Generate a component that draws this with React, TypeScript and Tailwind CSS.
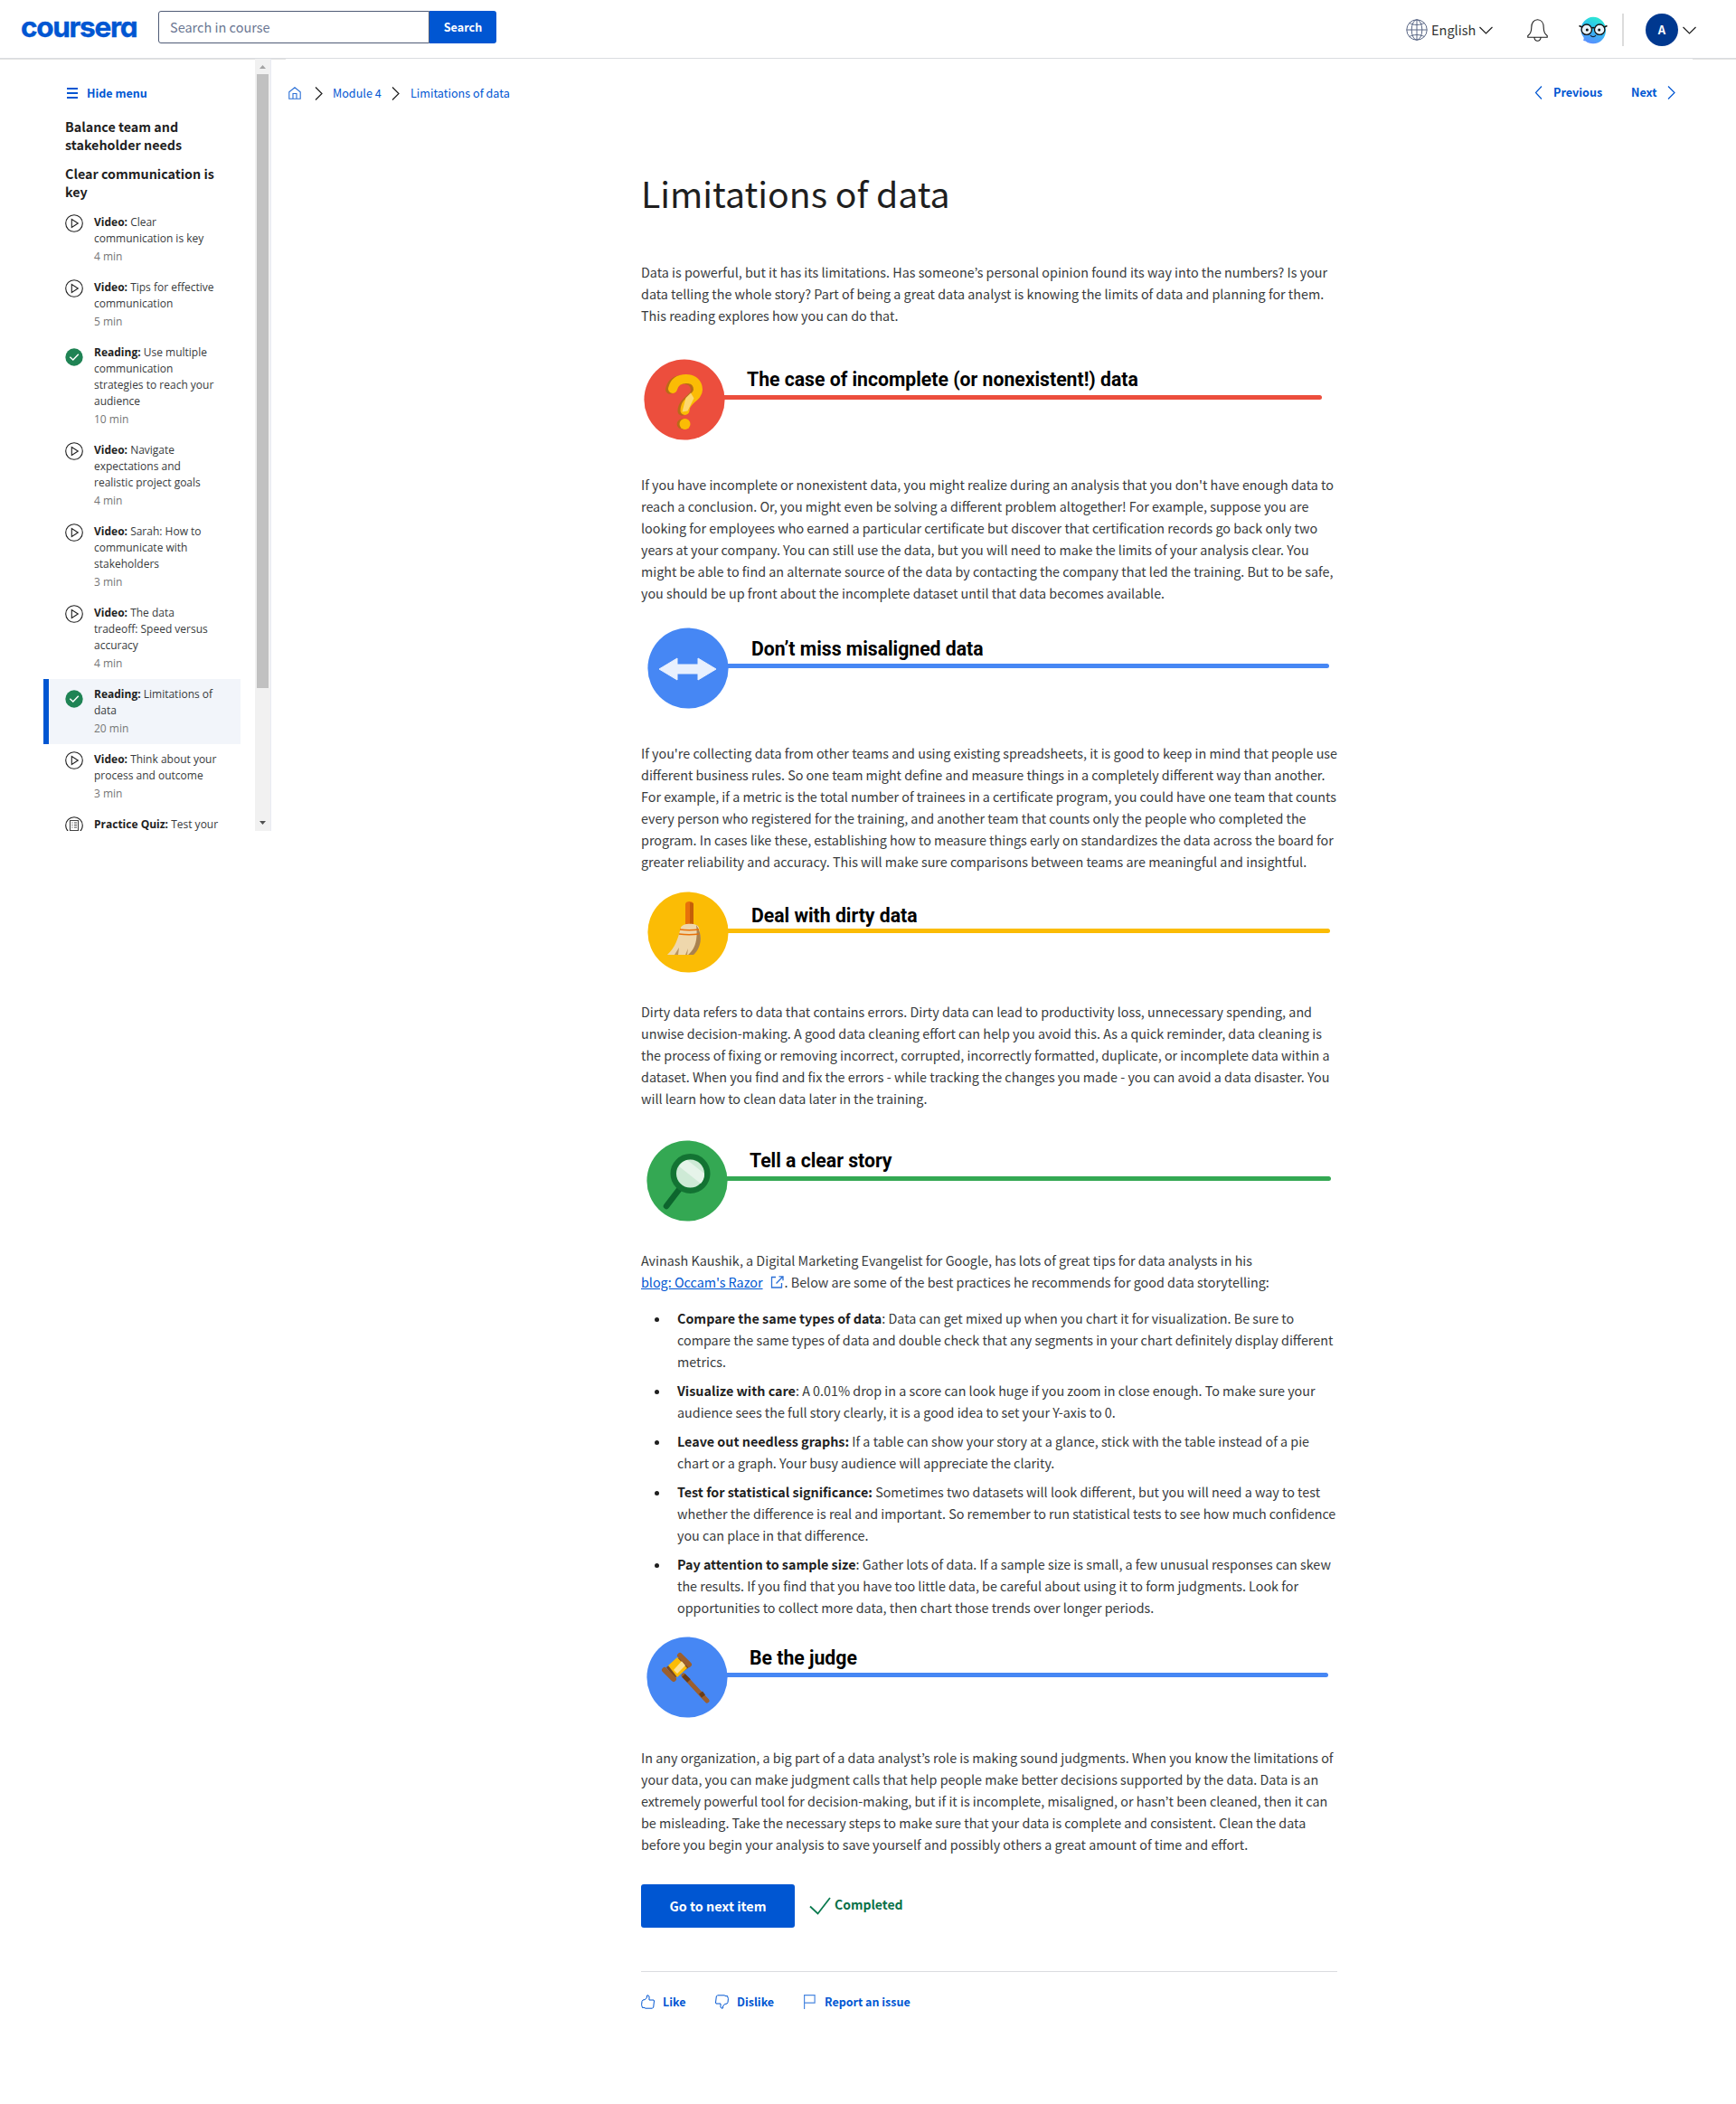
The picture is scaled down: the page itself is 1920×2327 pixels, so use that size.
import React from 'react';

function Chevron({ dir, className }: { dir: 'left' | 'right' | 'down'; className: string }) {
  const d = { left: 'M8 .5 1.5 7.5 8 14.5', right: 'M1 .5 8 7.5 1 14.5', down: 'M.5 1 7.5 8 14.5 1' }[dir];
  const box = dir === 'down' ? '0 0 15 9' : '0 0 9 15';
  return (
    <svg viewBox={box} className={className} fill="none" stroke="currentColor" strokeWidth="1.2">
      <path d={d} />
    </svg>
  );
}

function Header() {
  return (
    <header className="flex h-[65px] shrink-0 items-start border-b border-[#dadce0] bg-white">
      <svg className="ml-5 mt-1 h-14 w-[140px] overflow-visible" viewBox="0 0 140 56">
        <text x="3" y="36.5" fontFamily="Inter" fontWeight="700" fontSize="31.5" textLength="129.5" lengthAdjust="spacing"
          fill="#0056d2" stroke="#0056d2" strokeWidth=".4" style={{ fontFeatureSettings: '"cv11"' }}>coursera</text>
      </svg>
      <div className="ml-[15px] mt-3 flex h-9 w-[374px]">
        <div className="flex w-[300px] items-center rounded-l-[3px] border border-[#4f5b76] pl-3 text-[14.5px] text-[#6b7793]">Search in course</div>
        <button className="w-[74px] rounded-r-[3px] bg-[#0056d2] text-[12.6px] font-bold text-white">Search</button>
      </div>
      <div className="ml-[1006px] mt-[15px] flex h-9 items-center">
        <svg className="h-6 w-6" viewBox="0 0 24 24" fill="none" stroke="#5a6785" strokeWidth="1">
          <circle cx="12" cy="12" r="11.2" /><ellipse cx="12" cy="12" rx="5.8" ry="11.2" />
          <path d="M12 .8v22.4M.8 12h22.4M3.7 4.5c4.5 2.6 12 2.6 16.6 0M3.7 19.5c4.5-2.6 12-2.6 16.6 0" />
        </svg>
        <span className="ml-1 w-12 whitespace-nowrap text-[14.5px] text-[#333]">English</span>
        <Chevron dir="down" className="ml-[5px] h-[9px] w-[15px]" />
        <svg className="ml-[38px] h-[25px] w-[23px]" viewBox="0 0 23 25" fill="none" stroke="#1f1f1f" strokeWidth="1.1">
          <path d="M.8 20.300v-1.800c3.200-2 4-4.700 4-9.200C4.800 4.200 7.500.8 11.500.8s6.700 3.400 6.700 8.500c0 4.500.8 7.200 4 9.200v1.800zM7.900 20.300c.2 2.500 1.600 3.900 3.600 3.900s3.400-1.400 3.600-3.900" />
        </svg>
        <svg className="ml-[34px] h-[31px] w-[32px]" viewBox="0 0 32 31" fill="none">
          <defs>
            <linearGradient id="face" x1=".7" y1="0" x2=".35" y2="1">
              <stop offset="0" stopColor="#2eead0" /><stop offset=".4" stopColor="#2cc4ee" /><stop offset="1" stopColor="#5b8dff" />
            </linearGradient>
          </defs>
          <path d="M16 .8a14 14.500 0 0 1 14 14.700A14 14.500 0 0 1 16 30.300c-3.500 0-6.300-1-8.300-2.800L5.200 27l.6-2.900A14.500 14.500 0 0 1 2.500 15.700 14 14.500 0 0 1 16 .8z" fill="url(#face)" />
          <circle cx="8.800" cy="14.700" r="5.700" fill="#e8f3fb" stroke="#111" strokeWidth="1.300" />
          <circle cx="23.200" cy="14.700" r="5.700" fill="#e8f3fb" stroke="#111" strokeWidth="1.300" />
          <path d="M14.400 13.200c.9-.8 2.300-.8 3.200 0M3.800 12 .5 10.500M28.200 12l3.300-1.500" stroke="#111" strokeWidth="1.600" />
          <circle cx="9.300" cy="15" r="1.500" fill="#111" /><circle cx="22.700" cy="15" r="1.500" fill="#111" />
          <path d="M13.200 21.300c1.200 1.800 4.400 1.800 5.600 0" stroke="#123" strokeWidth="1.100" strokeLinecap="round" />
        </svg>
        <div className="ml-4 h-9 w-0.5 bg-[#dcdcdc]" />
        <div className="ml-6 flex h-9 w-9 items-center justify-center rounded-full bg-[#00388f] text-[13px] font-bold text-white">A</div>
        <Chevron dir="down" className="ml-[5px] h-[9px] w-[15px]" />
      </div>
    </header>
  );
}

type Item = { kind: string; lines: string[]; min?: string; icon: 'play' | 'done' | 'quiz'; active?: boolean };

const items: Item[] = [
  { kind: 'Video:', lines: ['Clear', 'communication is key'], min: '4 min', icon: 'play' },
  { kind: 'Video:', lines: ['Tips for effective', 'communication'], min: '5 min', icon: 'play' },
  { kind: 'Reading:', lines: ['Use multiple', 'communication', 'strategies to reach your', 'audience'], min: '10 min', icon: 'done' },
  { kind: 'Video:', lines: ['Navigate', 'expectations and', 'realistic project goals'], min: '4 min', icon: 'play' },
  { kind: 'Video:', lines: ['Sarah: How to', 'communicate with', 'stakeholders'], min: '3 min', icon: 'play' },
  { kind: 'Video:', lines: ['The data', 'tradeoff: Speed versus', 'accuracy'], min: '4 min', icon: 'play' },
  { kind: 'Reading:', lines: ['Limitations of', 'data'], min: '20 min', icon: 'done', active: true },
  { kind: 'Video:', lines: ['Think about your', 'process and outcome'], min: '3 min', icon: 'play' },
  { kind: 'Practice Quiz:', lines: ['Test your'], icon: 'quiz' },
];

function ItemIcon({ icon }: { icon: Item['icon'] }) {
  if (icon === 'done')
    return (
      <svg className="mt-1 h-5 w-5 shrink-0" viewBox="0 0 20 20" fill="none">
        <circle cx="10" cy="10" r="9.7" fill="#1f8354" />
        <path d="m5.3 9.7 3.5 3.3 6-6.2" stroke="#fff" strokeWidth="1.5" />
      </svg>
    );
  return (
    <svg className="h-5 w-5 shrink-0" viewBox="0 0 20 20" fill="none" stroke="#1f1f1f" strokeWidth="1.1">
      <circle cx="10" cy="10" r="9.3" />
      {icon === 'play' ? (
        <path d="M7.300 5.500v9l7-4.500z" />
      ) : (
        <path d="M5.500 4.500h9v11h-9zM7.500 7h1M10 7h3M7.500 9.500h1M10 9.500h3M7.500 12h1M10 12h3" stroke="#444" />
      )}
    </svg>
  );
}

function Sidebar() {
  return (
    <aside className="flex h-[854px] w-[300px] shrink-0 overflow-hidden">
      <div className="w-[282px] shrink-0">
        <div className="mt-[28px] flex h-5 items-center pl-[74px] text-[12.5px] font-bold text-[#0056d2]">
          <svg className="h-3 w-3" viewBox="0 0 12 12" fill="#0056d2"><path d="M0 0h12v2H0zM0 5h12v2H0zM0 10h12v2H0z" /></svg>
          <span className="ml-2.5">Hide menu</span>
        </div>
        <h2 className="mt-[17px] pl-[72px] text-[14.3px] font-bold leading-5 text-[#1f1f1f]">Balance team and<br />stakeholder needs</h2>
        <h3 className="mt-3 pl-[72px] text-[14.3px] font-bold leading-5 text-[#1f1f1f]">Clear communication is<br />key</h3>
        <ul className="mt-[7px] pl-12 font-['Open_Sans',sans-serif] text-[12px] leading-[18px] text-[#373a3c]">
          {items.map((it, i) => (
            <li key={i} className={it.active ? 'flex w-[218px] border-l-[6px] border-[#0056d2] bg-[#f2f5fa] pb-1.5 pl-[18px] pt-2' : 'flex w-[218px] pb-1.5 pl-6 pt-2'}>
              <ItemIcon icon={it.icon} />
              <div className="ml-3 whitespace-nowrap">
                {it.lines.map((l, j) => (
                  <div key={j}>{j === 0 && <b className="font-bold text-[#1f1f1f]">{it.kind} </b>}{l}</div>
                ))}
                {it.min && <div className="h-[22px] leading-[22px] text-[#757575]">{it.min}</div>}
              </div>
            </li>
          ))}
        </ul>
      </div>
      <div className="flex w-[18px] flex-col items-center border-r border-[#e8ebf3] bg-[#f1f1f1]">
        <svg className="mt-[7px] h-1 w-[7px]" viewBox="0 0 7 4"><path d="M3.500 0 7 4H0z" fill="#a3a3a3" /></svg>
        <div className="mt-1.5 h-[679px] w-[13px] bg-[#c1c1c1]" />
        <svg className="mt-[147px] h-1 w-[7px]" viewBox="0 0 7 4"><path d="M0 0h7L3.500 4z" fill="#505050" /></svg>
      </div>
    </aside>
  );
}

function Lines({ lines }: { lines: string[] }) {
  return <p className="whitespace-nowrap">{lines.map((l, i) => <span key={i} className="block">{l}</span>)}</p>;
}

function Banner({ title, color, box, text, line, children }: { title: string; color: string; box: string; text: string; line: string; children: React.ReactNode }) {
  return (
    <div className={box}>
      <svg className="h-[90px] w-[90px] shrink-0" viewBox="0 0 90 90" fill="none">
        <circle cx="45" cy="45" r="44.6" fill={color} />
        {children}
      </svg>
      <div className="-ml-1 flex flex-col font-['Roboto',sans-serif] text-[21.2px] font-bold leading-7 text-black">
        <h2 className={text}>{title}</h2>
        <div className={line} />
      </div>
    </div>
  );
}

const bullets: { b: string; lines: string[] }[] = [
  { b: 'Compare the same types of data', lines: [': Data can get mixed up when you chart it for visualization. Be sure to', 'compare the same types of data and double check that any segments in your chart definitely display different', 'metrics.'] },
  { b: 'Visualize with care', lines: [': A 0.01% drop in a score can look huge if you zoom in close enough. To make sure your', 'audience sees the full story clearly, it is a good idea to set your Y-axis to 0.'] },
  { b: 'Leave out needless graphs:', lines: [' If a table can show your story at a glance, stick with the table instead of a pie', 'chart or a graph. Your busy audience will appreciate the clarity.'] },
  { b: 'Test for statistical significance:', lines: [' Sometimes two datasets will look different, but you will need a way to test', 'whether the difference is real and important. So remember to run statistical tests to see how much confidence', 'you can place in that difference.'] },
  { b: 'Pay attention to sample size', lines: [': Gather lots of data. If a sample size is small, a few unusual responses can skew', 'the results. If you find that you have too little data, be careful about using it to form judgments. Look for', 'opportunities to collect more data, then chart those trends over longer periods.'] },
];

function Article() {
  return (
    <article className="ml-[409px] w-[770px] text-[14.33px] leading-6 text-[#373a3c]">
      <h1 className="mt-[68px] h-[66px] whitespace-nowrap text-[39.2px] font-normal leading-[66px] text-[#1f1f1f]">Limitations of data</h1>
      <div className="mt-[43px]">
        <Lines lines={['Data is powerful, but it has its limitations. Has someone’s personal opinion found its way into the numbers? Is your', 'data telling the whole story? Part of being a great data analyst is knowing the limits of data and planning for them.', 'This reading explores how you can do that.']} />
      </div>
      <Banner title="The case of incomplete (or nonexistent!) data" color="#ec4e3d" box="flex h-[163px] pl-[3px] pt-9"
        text="ml-[28px] mt-[9px] whitespace-nowrap" line="mt-[3px] h-[5px] w-[664px] rounded-r-full bg-[#ec4e3d]">
        <path d="M32 33C34 25 40 22 47 22C55 22 60 27 60 34C60 43 45.500 45 45.500 57" transform="translate(-3 .8)" stroke="#b96a17" strokeWidth="10" strokeLinecap="round" />
        <circle cx="42.500" cy="72" r="5.800" fill="#b96a17" />
        <path d="M32 33C34 25 40 22 47 22C55 22 60 27 60 34C60 43 45.500 45 45.500 57" stroke="#fbbc05" strokeWidth="10" strokeLinecap="round" />
        <path d="m46.500 43 5.500-5.500 3.500 6-7 14-6 1z" fill="#fde293" opacity=".75" />
        <circle cx="45.500" cy="72" r="6" fill="#fbbc05" />
      </Banner>
      <Lines lines={["If you have incomplete or nonexistent data, you might realize during an analysis that you don't have enough data to", 'reach a conclusion. Or, you might even be solving a different problem altogether! For example, suppose you are', 'looking for employees who earned a particular certificate but discover that certification records go back only two', 'years at your company. You can still use the data, but you will need to make the limits of your analysis clear. You', 'might be able to find an alternate source of the data by contacting the company that led the training. But to be safe,', 'you should be up front about the incomplete dataset until that data becomes available.']} />
      <Banner title="Don’t miss misaligned data" color="#4687f4" box="flex h-[153px] pl-[7px] pt-[26px]"
        text="ml-[29px] mt-[10px] whitespace-nowrap" line="mt-[2px] h-[5px] w-[668px] rounded-r-full bg-[#4687f4]">
        <path d="M13 46 33 34v7h23v-7l20 12-20 12v-7H33v7z" fill="#e8f0fe" stroke="#e8f0fe" strokeLinejoin="round" />
      </Banner>
      <Lines lines={["If you're collecting data from other teams and using existing spreadsheets, it is good to keep in mind that people use", 'different business rules. So one team might define and measure things in a completely different way than another.', 'For example, if a metric is the total number of trainees in a certificate program, you could have one team that counts', 'every person who registered for the training, and another team that counts only the people who completed the', 'program. In cases like these, establishing how to measure things early on standardizes the data across the board for', 'greater reliability and accuracy. This will make sure comparisons between teams are meaningful and insightful.']} />
      <Banner title="Deal with dirty data" color="#fbbc05" box="flex h-[142px] pl-[7px] pt-[21px]"
        text="ml-[29px] mt-[13px] whitespace-nowrap" line="h-[5px] w-[669px] rounded-r-full bg-[#fbbc05]">
        <path d="M42 36V14c0-4 9-4 9 0v22z" fill="#e8710a" /><path d="M47 36V12c3 0 4 1 4 2v22z" fill="#c45f08" />
        <path d="M37 40c1-5 18-6 20 0 3 14 1 23-7 30H22c9-8 12-19 15-30z" fill="#efd7ac" />
        <path d="M54 37c9 13 4 27-3 33h-6c8-7 11-17 9-33z" fill="#a9814e" />
        <path d="m30 70 5-8-1 8M42 70l3-7-1 7" fill="#b9945f" />
        <path d="M36 42c6 1 14 1 21 0M35 47c7 1 15 1 22 0" stroke="#e8710a" strokeWidth="1.500" />
      </Banner>
      <Lines lines={['Dirty data refers to data that contains errors. Dirty data can lead to productivity loss, unnecessary spending, and', 'unwise decision-making. A good data cleaning effort can help you avoid this. As a quick reminder, data cleaning is', 'the process of fixing or removing incorrect, corrupted, incorrectly formatted, duplicate, or incomplete data within a', 'dataset. When you find and fix the errors - while tracking the changes you made - you can avoid a data disaster. You', 'will learn how to clean data later in the training.']} />
      <Banner title="Tell a clear story" color="#34a853" box="flex h-[155px] pl-1.5 pt-[34px]"
        text="ml-[28px] mt-[9px] whitespace-nowrap" line="mt-[3px] h-[5px] w-[671px] rounded-r-full bg-[#34a853]">
        <path d="M38 52 22 73" stroke="#0d652d" strokeWidth="6.500" strokeLinecap="round" />
        <circle cx="48.500" cy="37" r="19" fill="#188038" stroke="#137333" strokeWidth="6" />
        <circle cx="48.500" cy="37" r="15.500" fill="#ceead6" />
        <path d="m36 29 24 19c3-3 4-7 4-11L45 22c-4 1-7 4-9 7z" fill="#e6f4ea" />
      </Banner>
      <div className="whitespace-nowrap">
        <span className="block">Avinash Kaushik, a Digital Marketing Evangelist for Google, has lots of great tips for data analysts in his</span>
        <span className="flex items-center">
          <a className="text-[#0056d2] underline">blog: Occam's Razor</a>
          <svg className="ml-2 h-[14px] w-4" viewBox="0 0 16 14" fill="none" stroke="#2a6fd6" strokeWidth="1.3"><path d="M6 1.500H1.500v11.500h11V8M9.500 .8H14v4.500M14 .8 6.500 8.500" /></svg>
          <span>. Below are some of the best practices he recommends for good data storytelling:</span>
        </span>
      </div>
      <ul className="mt-4">
        {bullets.map((x) => (
          <li key={x.b} className="mb-2 flex">
            <span className="ml-[15px] mt-[11px] h-[5px] w-[5px] shrink-0 rounded-full bg-[#1f1f1f]" />
            <p className="ml-5 whitespace-nowrap">
              {x.lines.map((l, i) => (
                <span key={i} className="block whitespace-pre">{i === 0 && <b className="font-bold text-[#1f1f1f]">{x.b}</b>}{l}</span>
              ))}
            </p>
          </li>
        ))}
      </ul>
      <Banner title="Be the judge" color="#4687f4" box="flex h-[134px] pl-1.5 pt-3"
        text="ml-[28px] mt-[10px] whitespace-nowrap" line="mt-[2px] h-[5px] w-[668px] rounded-r-full bg-[#4687f4]">
        <path d="m41 43 26 28" stroke="#9c5f2d" strokeWidth="5" strokeLinecap="round" />
        <path d="m41 43 6 6M60 62l3 4" stroke="#6b3d18" strokeWidth="5" />
        <path d="m22 34 16-12 9 12-16 12z" fill="#7c4a1e" />
        <path d="m24 32 10-9 11 12-11 10z" fill="#fbbc05" /><path d="m30 37 9-10 4 5-9 9z" fill="#fde293" />
        <path d="m20 37 10 10M37 21l10 10" stroke="#9c5f2d" strokeWidth="6" strokeLinecap="round" />
      </Banner>
      <Lines lines={['In any organization, a big part of a data analyst’s role is making sound judgments. When you know the limitations of', 'your data, you can make judgment calls that help people make better decisions supported by the data. Data is an', 'extremely powerful tool for decision-making, but if it is incomplete, misaligned, or hasn’t been cleaned, then it can', 'be misleading. Take the necessary steps to make sure that your data is complete and consistent. Clean the data', 'before you begin your analysis to save yourself and possibly others a great amount of time and effort.']} />
      <div className="mt-8 flex h-12">
        <button className="w-[170px] rounded-[3px] bg-[#0056d2] text-[14.33px] font-bold text-white">Go to next item</button>
        <svg className="ml-4 mt-[14px] h-5 w-6" viewBox="0 0 24 20" fill="none" stroke="#0b7a4f" strokeWidth="1.8"><path d="m1 10.500 8.500 8L23 1" /></svg>
        <span className="ml-[4px] mt-[10px] text-[14px] font-bold text-[#0a7149]">Completed</span>
      </div>
      <div className="mt-12 flex h-[67px] items-center border-t border-[#dadce0] text-[12.5px] font-bold text-[#0056d2]">
        <svg className="h-4 w-[15px]" viewBox="0 0 15 16" fill="none" stroke="currentColor"><path d="M1 7.500 2 6l2.500-.5L6.500 3V1L8 .8 9 2v4h5l.5 1-.8 7-1.200 1.200H5L3 14.300l-1.500.2-.9-3z" /></svg>
        <span className="ml-[9px] w-[25px]">Like</span>
        <svg className="ml-[33px] h-4 w-[15px] rotate-180" viewBox="0 0 15 16" fill="none" stroke="currentColor"><path d="M1 7.500 2 6l2.500-.5L6.500 3V1L8 .8 9 2v4h5l.5 1-.8 7-1.200 1.200H5L3 14.300l-1.500.2-.9-3z" /></svg>
        <span className="ml-[9px] w-[41px]">Dislike</span>
        <svg className="ml-[33px] h-4 w-[13px]" viewBox="0 0 13 16" fill="none" stroke="#4a87e0" strokeWidth="1.2"><path d="M.6 16V.6h11.500v8.500H.6" /></svg>
        <span className="ml-[10px]">Report an issue</span>
      </div>
    </article>
  );
}

export default function App() {
  return (
    <div className="flex h-[2327px] w-[1920px] flex-col overflow-hidden bg-white font-['Noto_Sans_CJK_KR',sans-serif] text-[#1f1f1f]">
      <Header />
      <div className="flex h-px shrink-0 justify-between">
        <div className="w-[316px] bg-[#e3e3e3]" />
        <div className="w-12 bg-[#e3e3e3]" />
      </div>
      <div className="-mt-px flex">
        <Sidebar />
        <main className="w-[1620px]">
          <nav className="mt-[27px] flex h-5 items-center pl-[19px] text-[12.6px] text-[#0056d2]">
            <svg className="mt-0.5 h-[14px] w-[14px]" viewBox="0 0 14 14" fill="none" stroke="#2a6fd6" strokeWidth="1.1"><path d="M.8 5.800 7 .8l6.200 5v7.500H.8zM5 13V7.500h4V13" /></svg>
            <Chevron dir="right" className="ml-[15px] mt-0.5 h-[15px] w-[9px] text-[#1f1f1f]" />
            <span className="ml-[11px] mt-[2px] w-[53px] whitespace-nowrap">Module 4</span>
            <Chevron dir="right" className="ml-3 mt-0.5 h-[15px] w-[9px] text-[#1f1f1f]" />
            <span className="ml-[12px] mt-[2px] w-[110px] whitespace-nowrap">Limitations of data</span>
            <Chevron dir="left" className="ml-auto h-[15px] w-[9px]" />
            <span className="ml-3 w-[54px] font-bold">Previous</span>
            <span className="ml-8 w-[27px] font-bold">Next</span>
            <Chevron dir="right" className="ml-[13px] mr-[67px] h-[15px] w-[9px]" />
          </nav>
          <Article />
        </main>
      </div>
    </div>
  );
}
